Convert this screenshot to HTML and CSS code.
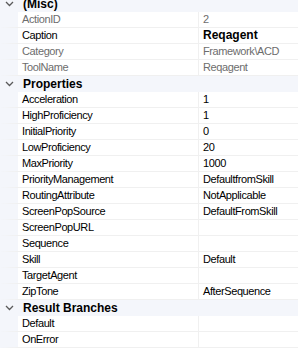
FILE: index.html
```html
<!DOCTYPE html>
<html lang="en">
<head>
    <meta charset="UTF-8">
    <title>Properties</title>
    <link rel="stylesheet" href="styles.css">
</head>
<body>
    <div class="grid">
        <div class="cat">
            <svg class="chev" width="9" height="6" viewBox="0 0 9 6"><polyline points="1,1 4.5,4.5 8,1" fill="none" stroke="#5a5a5a" stroke-width="1.3"/></svg>
            <span>(Misc)</span>
        </div>
        <div class="row ro"><div class="name">ActionID</div><div class="val">2</div></div>
        <div class="row"><div class="name">Caption</div><div class="val bold">Reqagent</div></div>
        <div class="row ro"><div class="name">Category</div><div class="val">Framework\ACD</div></div>
        <div class="row ro"><div class="name">ToolName</div><div class="val">Reqagent</div></div>

        <div class="cat">
            <svg class="chev" width="9" height="6" viewBox="0 0 9 6"><polyline points="1,1 4.5,4.5 8,1" fill="none" stroke="#5a5a5a" stroke-width="1.3"/></svg>
            <span>Properties</span>
        </div>
        <div class="row"><div class="name">Acceleration</div><div class="val">1</div></div>
        <div class="row"><div class="name">HighProficiency</div><div class="val">1</div></div>
        <div class="row"><div class="name">InitialPriority</div><div class="val">0</div></div>
        <div class="row"><div class="name">LowProficiency</div><div class="val">20</div></div>
        <div class="row"><div class="name">MaxPriority</div><div class="val">1000</div></div>
        <div class="row"><div class="name">PriorityManagement</div><div class="val">DefaultfromSkill</div></div>
        <div class="row"><div class="name">RoutingAttribute</div><div class="val">NotApplicable</div></div>
        <div class="row"><div class="name">ScreenPopSource</div><div class="val">DefaultFromSkill</div></div>
        <div class="row"><div class="name">ScreenPopURL</div><div class="val"></div></div>
        <div class="row"><div class="name">Sequence</div><div class="val"></div></div>
        <div class="row"><div class="name">Skill</div><div class="val">Default</div></div>
        <div class="row"><div class="name">TargetAgent</div><div class="val"></div></div>
        <div class="row"><div class="name">ZipTone</div><div class="val">AfterSequence</div></div>

        <div class="cat">
            <svg class="chev" width="9" height="6" viewBox="0 0 9 6"><polyline points="1,1 4.5,4.5 8,1" fill="none" stroke="#5a5a5a" stroke-width="1.3"/></svg>
            <span>Result Branches</span>
        </div>
        <div class="row"><div class="name">Default</div><div class="val"></div></div>
        <div class="row"><div class="name">OnError</div><div class="val"></div></div>
    </div>
</body>
</html>
```
FILE: styles.css
```css
body {
    margin: 0;
    background-color: #fff;
    font-family: "Liberation Sans", Arial, sans-serif;
    font-size: 11px;
    letter-spacing: -0.4px;
    color: #000;
    overflow: hidden;
}
.grid {
    margin-top: -4px;
}
.cat {
    display: flex;
    align-items: center;
    height: 16px;
    background-color: #f4f6fb;
    font-size: 12px;
    font-weight: bold;
    letter-spacing: 0;
}
.cat .chev {
    margin: 0 9px 0 5px;
}
.row {
    display: flex;
    height: 15px;
    line-height: 15px;
    border-left: 18px solid #f4f6fb;
    border-bottom: 1px solid #f0f0f0;
}
.name {
    width: 176px;
    padding-left: 4px;
    border-right: 1px solid #f0f0f0;
    white-space: nowrap;
}
.val {
    flex: 1;
    padding-left: 4px;
    white-space: nowrap;
}
.ro .name,
.ro .val {
    color: #6d6d6d;
}
.bold {
    font-size: 12px;
    font-weight: bold;
    letter-spacing: 0;
}
```
